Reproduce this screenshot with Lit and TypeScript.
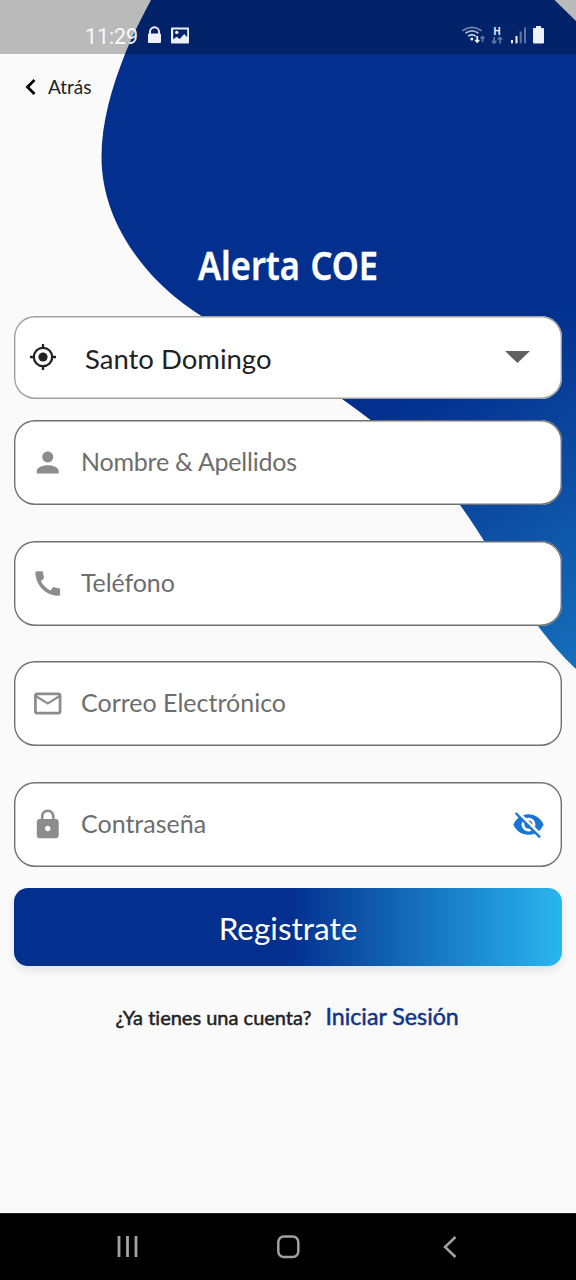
import { LitElement, html, css, svg } from "lit";
import { customElement } from "lit/decorators.js";

const person = svg`<path d="M12 12c2.21 0 4-1.79 4-4s-1.79-4-4-4-4 1.79-4 4 1.79 4 4 4zm0 2c-2.67 0-8 1.34-8 4v2h16v-2c0-2.66-5.33-4-8-4z"/>`;
const phone = svg`<path d="M20.01 15.38c-1.23 0-2.42-.2-3.53-.56-.35-.12-.74-.03-1.01.24l-1.57 1.97c-2.83-1.35-5.48-3.9-6.89-6.83l1.95-1.66c.27-.28.35-.67.24-1.02-.37-1.11-.56-2.3-.56-3.53 0-.54-.45-.99-.99-.99H4.19C3.65 3 3 3.24 3 3.99 3 13.28 10.73 21 20.01 21c.71 0 .99-.63.99-1.18v-3.45c0-.54-.45-.99-.99-.99z"/>`;
const mail = svg`<path d="M20 4H4c-1.1 0-1.99.9-1.99 2L2 18c0 1.1.9 2 2 2h16c1.1 0 2-.9 2-2V6c0-1.1-.9-2-2-2zm0 14H4V8l8 5 8-5v10zm-8-7L4 6h16l-8 5z"/>`;
const lock = svg`<path d="M18 8h-1V6c0-2.76-2.24-5-5-5S7 3.24 7 6v2H6c-1.1 0-2 .9-2 2v10c0 1.1.9 2 2 2h12c1.1 0 2-.9 2-2V10c0-1.1-.9-2-2-2zm-6 9c-1.1 0-2-.9-2-2s.9-2 2-2 2 .9 2 2-.9 2-2 2zm3.1-9H8.900V6c0-1.71 1.39-3.1 3.1-3.1 1.71 0 3.1 1.39 3.1 3.1v2z"/>`;
const eyeOff = svg`<path d="M12 7c2.76 0 5 2.24 5 5 0 .65-.13 1.26-.36 1.83l2.92 2.92c1.51-1.26 2.7-2.89 3.43-4.75-1.73-4.39-6-7.5-11-7.5-1.4 0-2.74.25-3.98.7l2.16 2.16C10.74 7.13 11.35 7 12 7zM2 4.27l2.28 2.28.46.46C3.08 8.3 1.78 10.02 1 12c1.73 4.39 6 7.5 11 7.5 1.55 0 3.03-.3 4.38-.84l.42.42L19.73 22 21 20.73 3.27 3 2 4.27zM7.53 9.8l1.55 1.55c-.05.21-.08.43-.08.65 0 1.66 1.34 3 3 3 .22 0 .44-.03.65-.08l1.55 1.55c-.67.33-1.41.53-2.2.53-2.76 0-5-2.24-5-5 0-.79.2-1.53.53-2.2zm4.31-.78l3.15 3.15.02-.16c0-1.66-1.34-3-3-3l-.17.01z"/>`;

const fields = [
  { label: "Nombre & Apellidos", icon: person, cls: "name" },
  { label: "Teléfono", icon: phone, cls: "phone" },
  { label: "Correo Electrónico", icon: mail, cls: "mail" },
  { label: "Contraseña", icon: lock, cls: "pass", secret: true },
];

@customElement("app-root")
export class AppRoot extends LitElement {
  static styles = css`
    :host { display: block; font-family: Lato, sans-serif; }
    * { box-sizing: border-box; }
    svg { display: block; flex: none; }
    .screen { position: relative; display: flex; flex-direction: column; width: 576px; height: 1280px; background: #fafafa; overflow: hidden; }
    .blob { position: absolute; left: 0; top: 0; }
    .status { position: relative; height: 54px; background: rgba(0,0,0,.255); display: flex; align-items: flex-start; color: #fff; padding-left: 85px; flex: none; }
    .clock { font: 400 21.5px/25px Roboto, sans-serif; padding-top: 24px; width: 62px; opacity: .93; letter-spacing: -.1px; }
    .back { position: relative; display: flex; align-items: center; height: 66px; padding-left: 24px; color: #222; font-size: 19px; gap: 11px; flex: none; }
    .back span { padding-bottom: 2px; }
    .title { position: relative; margin-top: 112px; height: 83.600px; flex: none; }
    .title text { word-spacing: 2px; }
    .form { position: relative; padding: 0 14px; display: flex; flex-direction: column; flex: none; }
    .box { background: #fff; box-shadow: inset 0 0 0 1.4px #707070; border-radius: 21px; display: flex; align-items: center; height: 85px; padding: 0 17px 0 18px; color: #6d6d6d; font-size: 25px; margin-bottom: 35.4px; }
    .box svg.lead { fill: #8c8c8c; margin-right: 17.5px; }
    .box .label { flex: 1; padding-bottom: 3px; white-space: nowrap; }
    .box.name .label { letter-spacing: -.23px; }
    .box.phone .label { letter-spacing: -.1px; }
    .box.select { box-shadow: inset 0 0 0 1.4px #a0a0a0; height: 83.5px; margin-bottom: 21.4px; color: #222; font-size: 27.5px; padding: 0 32px 1px 16px; }
    .select .label { padding: 3px 0 0 29px; }
    .box.pass { margin-bottom: 21px; }
    .submit { height: 78.500px; border: 0; border-radius: 14px; color: #fff; font: 400 31.5px/78px Lato, sans-serif; padding: 1.500px 0 0; text-align: center; background: linear-gradient(90deg, #032f8e 50%, #29b6ee); box-shadow: 0 5px 10px rgba(0,0,0,.09); }
    .login { display: flex; align-items: baseline; padding-left: 101.500px; margin-top: 34.500px; white-space: nowrap; color: #222; font-size: 20px; line-height: 30px; -webkit-text-stroke: .5px; font-variant-ligatures: none; }
    .login a { color: #10348b; font-size: 23.200px; margin-left: 14px; }
    .nav { position: relative; margin-top: auto; height: 67px; background: #000; flex: none; border-top: 1px solid #222; }
  `;

  render() {
    return html`<div class="screen">
      <svg class="blob" width="576" height="680" viewBox="0 0 576 680">
        <defs><linearGradient id="g" gradientUnits="userSpaceOnUse" x1="338" y1="335" x2="701" y2="950">
          <stop offset=".12" stop-color="#032f8e"/><stop offset="1" stop-color="#27abe6"/></linearGradient></defs>
        <path fill="url(#g)" d="M151 0C143 15 134 32 125 54C112 87 101.500 122 101.500 157C101.500 213 134 263 175 297C223 336 286 358 342 399C391 434 431 466 460 505C490 546 515 597 538 626C550 642 563 657 576 669V21L554.500 0Z"/>
      </svg>
      <div class="status">
        <span class="clock">11:29</span>
        <svg width="429" height="54" viewBox="147 0 429 54" fill="#eef1fb">
          <path d="M150 34v-2.200a4.500 4.500 0 0 1 9 0V34" fill="none" stroke="#eef1fb" stroke-width="2"/><rect x="148" y="33.500" width="13" height="9.500" rx="1"/>
          <rect x="171" y="27.500" width="18" height="16" rx=".8"/><path d="M173.200 29.500h14v7.800l-3-3.300-4.400 5-3.300-2.300-3.300 2.800z" fill="#03246b"/><circle cx="176.800" cy="32.400" r="1.700"/>
          <g fill="none" stroke="#eef1fb" stroke-width="1.700"><path opacity=".48" d="M462.500 30.800q9.500-7 19 0"/><path opacity=".7" d="M465.500 33.300q6.500-4.800 13 0"/><path d="M468.300 36.200q3.700-2.900 7.400 0"/><path d="M477.200 36v6m-2-2 2 2 2-2"/><path opacity=".4" d="M482.500 42v-5.500m-2 2 2-2 2 2"/><path opacity=".4" d="M494.200 37v6m-2.200-2.200 2.200 2.200 2.200-2.200M500 43.500v-6m-2.200 2.200 2.200-2.200 2.200 2.200"/></g>
          <circle cx="471.800" cy="39" r="1.500"/>
          <text x="497" y="34.600" font-family="Roboto" font-size="10" font-weight="700" text-anchor="middle">H</text>
          <rect x="511" y="40" width="2" height="3.300"/><rect x="515.500" y="36" width="2" height="7.300"/><rect opacity=".4" x="519.700" y="31.500" width="2" height="11.800"/><rect opacity=".4" x="524" y="27.500" width="2" height="15.800"/>
          <path d="M536 26h5v2h2q1 0 1 1v13.400q0 1-1 1h-9q-1 0-1-1V29q0-1 1-1h2z"/>
        </svg>
      </div>
      <div class="back"><svg width="13" height="18" viewBox="0 0 13 18"><path d="M10.500 2 3.500 9l7 7" fill="none" stroke="#000" stroke-width="2.800"/></svg><span>Atrás</span></div>
      <div class="title"><svg width="576" height="60" viewBox="0 0 576 60" fill="#fff" font-family="Noto Sans" font-weight="600" font-size="40.500" stroke="#fff" stroke-width=".4">
        <text x="198" y="48.200" textLength="180" lengthAdjust="spacingAndGlyphs">Alerta COE</text></svg></div>
      <div class="form">
        <div class="box select">
          <svg width="26" height="26" viewBox="0 0 26 26" fill="none" stroke="#222" stroke-width="2.300"><circle cx="13" cy="13" r="9.200"/><circle cx="13" cy="13" r="4.600" fill="#222" stroke="none"/><path d="M13 0v4M13 22v4M0 13h4M22 13h4"/></svg>
          <span class="label">Santo Domingo</span>
          <svg width="25" height="12" viewBox="0 0 25 12"><path d="M0 0h25L12.500 12z" fill="#616161"/></svg>
        </div>
        ${fields.map((f) => html`<div class="box ${f.cls}">
          <svg class="lead" width="31.500" height="33" viewBox="0.500 0 23 24">${f.icon}</svg>
          <span class="label">${f.label}</span>
          ${f.secret ? html`<svg width="33" height="33" viewBox="0 0 24 24" fill="#1976d2">${eyeOff}</svg>` : ""}
        </div>`)}
        <button class="submit">Registrate</button>
        <div class="login"><span>¿Ya tienes una cuenta?</span><a>Iniciar Sesión</a></div>
      </div>
      <div class="nav"><svg width="576" height="66" viewBox="0 1214 576 66" fill="none" stroke="#a2a2a2" stroke-width="2.500">
        <path stroke-width="2.800" d="M119 1236v21M127.500 1236v21M136 1236v21"/><rect x="278.300" y="1236.500" width="20" height="20.500" rx="5.500"/><path d="m455.500 1237-10.500 10 10.500 10"/></svg></div>
    </div>`;
  }
}
